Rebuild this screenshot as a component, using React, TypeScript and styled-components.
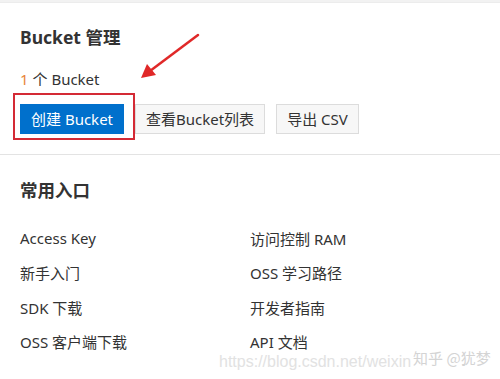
import styled, { createGlobalStyle } from 'styled-components'

const GlobalStyle = createGlobalStyle`
  html, body {
    margin: 0;
    padding: 0;
    background: #fff;
  }
  body {
    font-family: "Noto Sans", "Noto Sans CJK SC", sans-serif;
    color: #333;
  }
`

const Page = styled.div`
  position: relative;
  width: 500px;
  height: 379px;
  overflow: hidden;
  background: #fff;
`

const TopBand = styled.div`
  height: 2px;
  background: #f2f2f2;
  border-bottom: 1px solid #ececec;
`

const Section = styled.section<{ $divider?: boolean }>`
  padding: ${({ $divider }) => ($divider ? '22px 20px 20px' : '23px 20px 0')};
  border-bottom: ${({ $divider }) => ($divider ? '1px solid #e3e3e3' : 'none')};
`

const Title = styled.h2`
  margin: 0;
  font-size: 17.5px;
  line-height: 24px;
  font-weight: 700;
  color: #333;
`

const Count = styled.div`
  margin-top: 20px;
  font-size: 15px;
  line-height: 20px;
  color: #333;

  em {
    font-style: normal;
    color: #e8853a;
  }
`

const Toolbar = styled.div`
  display: flex;
  gap: 11px;
  margin-top: 15px;
`

const Highlight = styled.span`
  position: relative;
  display: inline-flex;

  &::after {
    content: '';
    position: absolute;
    top: -11px;
    left: -7px;
    right: -11px;
    bottom: -6px;
    border: 2px solid #d42a35;
    pointer-events: none;
  }
`

const Button = styled.button<{ $primary?: boolean }>`
  height: 30px;
  padding: 0 10px;
  font-family: inherit;
  font-size: 15px;
  line-height: 28px;
  border: 1px solid ${({ $primary }) => ($primary ? '#0070cc' : '#dcdcdc')};
  background: ${({ $primary }) => ($primary ? '#0070cc' : '#f7f7f7')};
  color: ${({ $primary }) => ($primary ? '#fff' : '#333')};
  cursor: pointer;
  white-space: nowrap;
`

const LinkGrid = styled.div`
  display: grid;
  grid-template-columns: 230px 1fr;
  grid-auto-rows: 34.5px;
  margin-top: 19px;
`

const LinkItem = styled.a`
  display: flex;
  align-items: center;
  font-size: 15px;
  color: #333;
  text-decoration: none;
`

const Arrow = styled.svg`
  position: absolute;
  left: 136px;
  top: 30px;
  width: 68px;
  height: 54px;
  pointer-events: none;
`

const Watermark = styled.div`
  position: absolute;
  left: 219px;
  top: 352px;
  display: flex;
  align-items: baseline;
  font-family: "Liberation Sans", Arial, sans-serif;
  font-size: 16px;
  line-height: 18px;
  color: #e2e2e2;
  text-shadow: 0 0 1px #fff;
  white-space: nowrap;
  pointer-events: none;
`

const Zhihu = styled.span`
  position: relative;
  top: -3px;
  margin-left: 2px;
  font-family: "Noto Sans CJK SC", sans-serif;
  font-size: 15px;
  color: #d4d4d4;
`

const links = [
  ['Access Key', '访问控制 RAM'],
  ['新手入门', 'OSS 学习路径'],
  ['SDK 下载', '开发者指南'],
  ['OSS 客户端下载', 'API 文档'],
]

export default function App() {
  return (
    <Page>
      <GlobalStyle />
      <TopBand />
      <Section $divider>
        <Title>Bucket 管理</Title>
        <Count>
          <em>1</em> 个 Bucket
        </Count>
        <Toolbar>
          <Highlight>
            <Button $primary>创建 Bucket</Button>
          </Highlight>
          <Button>查看Bucket列表</Button>
          <Button>导出 CSV</Button>
        </Toolbar>
      </Section>
      <Section>
        <Title>常用入口</Title>
        <LinkGrid>
          {links.flat().map((label) => (
            <LinkItem key={label} href="#">
              {label}
            </LinkItem>
          ))}
        </LinkGrid>
      </Section>
      <Arrow viewBox="0 0 68 54">
        <line x1="62" y1="5" x2="14" y2="41" stroke="#e02828" strokeWidth="2.5" strokeLinecap="round" />
        <polygon points="5,48 11,34 20,45" fill="#e02828" />
      </Arrow>
      <Watermark>
        <span>https://blog.csdn.net/weixin</span>
        <Zhihu>知乎 @犹梦</Zhihu>
      </Watermark>
    </Page>
  )
}
